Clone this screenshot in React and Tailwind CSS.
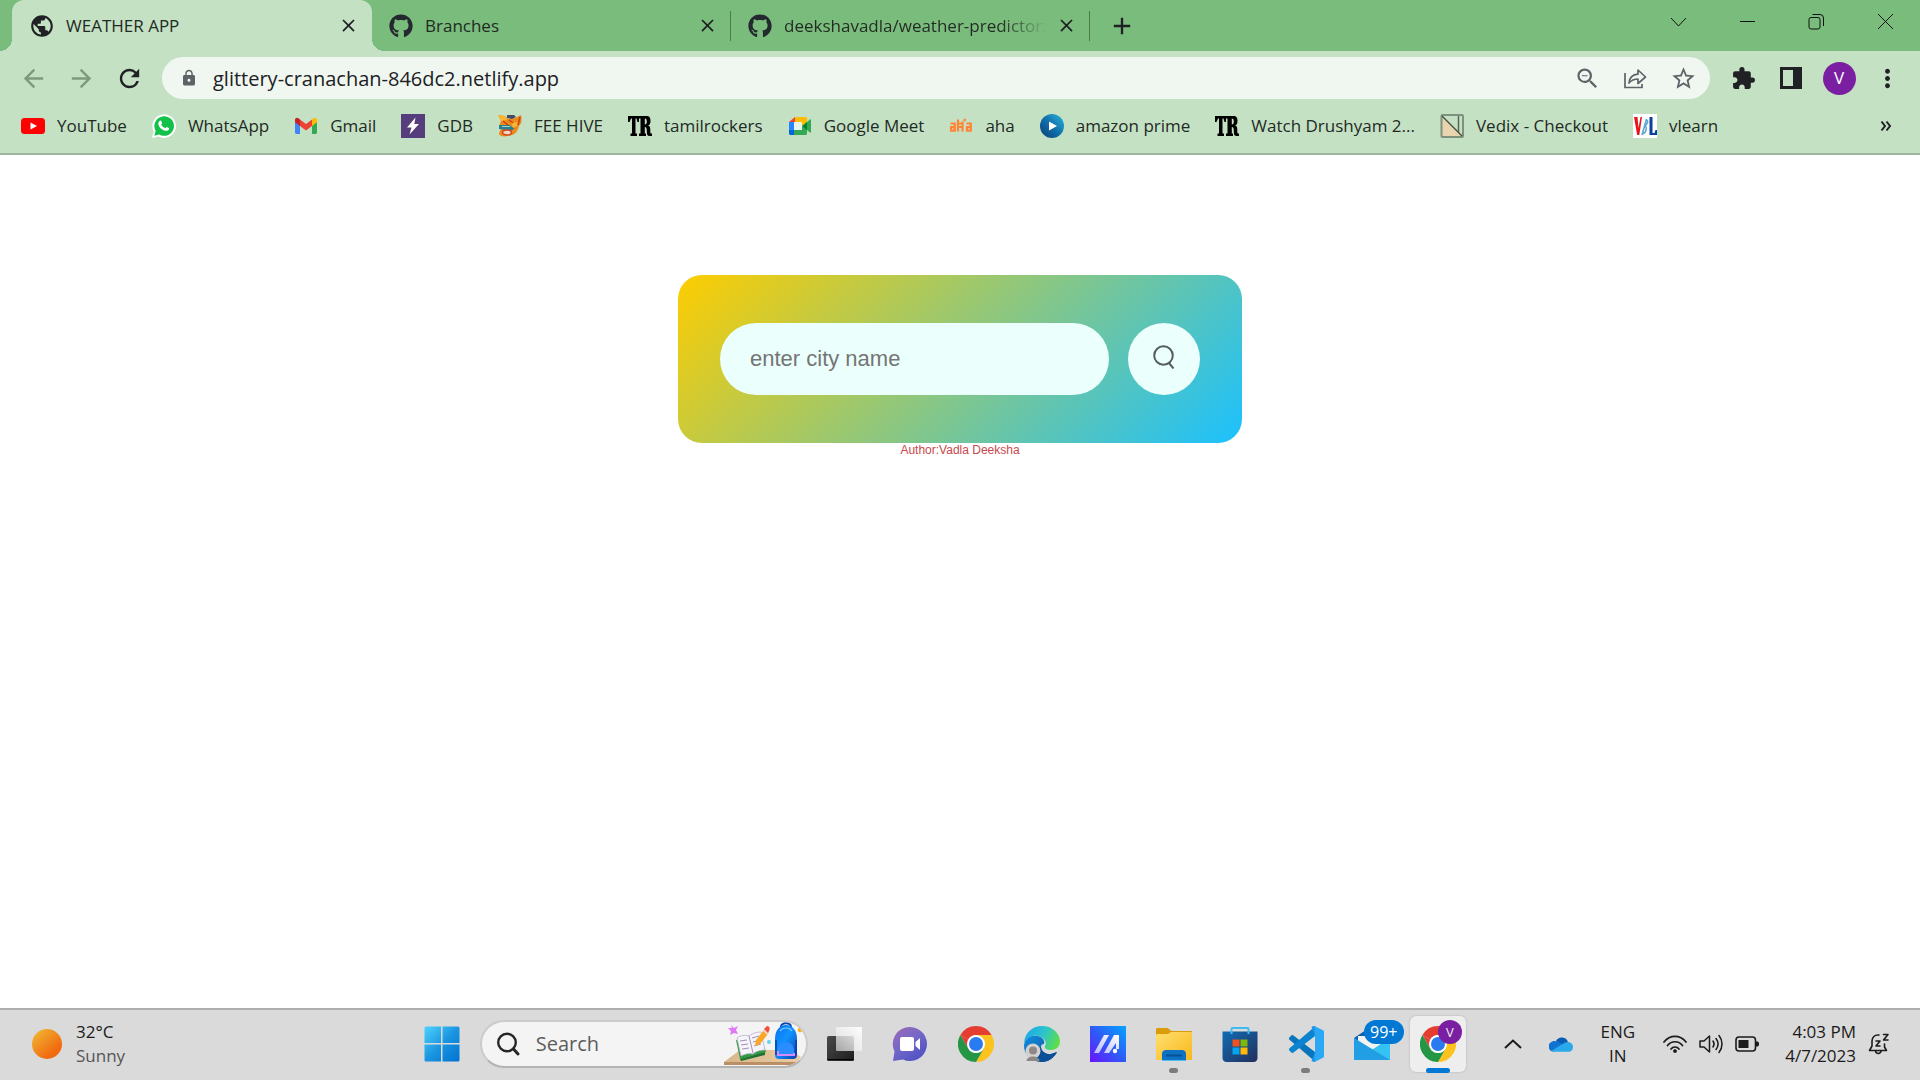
import React from "react";
import {
  MdPublic, MdClose, MdAdd, MdArrowBack, MdArrowForward, MdRefresh, MdLock,
  MdZoomOut, MdStarBorder, MdExtension, MdMoreVert,
} from "react-icons/md";
import { FaGithub } from "react-icons/fa";

/* ---------- browser window icons ---------- */

const ShareIcon = () => (
  <svg viewBox="0 0 24 24" className="size-6" fill="none" stroke="currentColor" strokeWidth="1.700">
    <path d="M2 7v14.500h17V18" />
    <path d="M6 17c.5-5 3.500-8.500 9-8.800V4l7.500 7-7.500 6.500v-4.500C11 13 8.500 14 6 17z" strokeLinejoin="round" />
  </svg>
);

const SidePanelIcon = () => (
  <svg viewBox="0 0 22 22" className="size-[22px]">
    <path fillRule="evenodd" d="M0 0h22v22H0zM3 3v16h10V3z" fill="#202124" />
  </svg>
);

/* ---------- bookmark icons ---------- */

const YouTube = () => (
  <svg viewBox="0 0 24 24" className="size-6">
    <rect y="4" width="24" height="16" rx="3.500" fill="#f00" />
    <path d="M9.500 8.500v7l6.500-3.500z" fill="#fff" />
  </svg>
);

const WhatsApp = () => (
  <svg viewBox="0 0 24 24" className="size-6">
    <path d="M0 24l1.700-6.300A11.800 11.800 0 1 1 6.300 22.400z" fill="#fff" />
    <path d="M2.300 21.700l1.400-4.700A9.800 9.800 0 1 1 7.200 20.500z" fill="#12c148" />
    <path d="M7.300 7.200c.6-.8 1.700-.8 2-.1l.8 1.900c.2.500-.8 1.300-.8 1.600.7 1.600 2.300 2.900 3.900 3.500.5 0 1.200-1.300 1.600-1.100l2 1c.5.300.3 1.600-.5 2.200-1 .8-2.400.9-4.300.2-2.400-.9-4.500-3-5.300-5-.7-1.800-.2-3.200.6-4.200z" fill="#fff" />
  </svg>
);

const Gmail = () => (
  <svg viewBox="0 0 24 24" className="size-6">
    <path d="M1 6v12.500c0 .8.700 1.500 1.500 1.500H6v-8.500z" fill="#4285f4" />
    <path d="M23 6v12.500c0 .8-.7 1.500-1.500 1.500H18v-8.500z" fill="#34a853" />
    <path d="M18 5.500v6.500l5-3.800V6c0-2-2.200-2.800-3.700-1.600z" fill="#fbbc04" />
    <path d="M6 5.500l6 4.500 6-4.500V12l-6 4.500L6 12z" fill="#ea4335" />
    <path d="M1 6v2.200L6 12V5.500L4.700 4.400C3.200 3.200 1 4 1 6z" fill="#c5221f" />
  </svg>
);

const Gdb = () => (
  <svg viewBox="0 0 24 24" className="size-6">
    <path d="M0 0h24v24H0z" fill="#563d7c" />
    <path d="M14.500 3.500L6 13.500h4.500L8.500 20.500 18 10h-4.700z" fill="#fff" />
  </svg>
);

const FeeHive = () => (
  <svg viewBox="0 0 24 24" className="size-6">
    <path d="M0 1l7 1 3 3 7-1 6-3c1 5 1 8-2 11-1 4-3 8-7 9-6 2-12 2-13-1 0-3 2-5 4-6L1 12 3 7z" fill="#ee8a1d" />
    <path d="M0 1l7 1 2 4-6 1zM13 7c2 2 5 2 7 0l-1 5-4 2z" fill="#f7b733" />
    <path d="M9 1h7l2 2-4 2-5-1z" fill="#454a63" />
    <path d="M1 11h11c1 2 3 3 5 3l-4 3-12-2z" fill="#2c7f91" />
    <path d="M4 12.500h8" stroke="#9ed1ca" strokeWidth="1" />
    <ellipse cx="9" cy="18.500" rx="4.500" ry="2.500" fill="#f2d7c7" stroke="#d24b1b" strokeWidth="1.500" />
    <path d="M5 7l5 4M11 6l4 3M22 3l-2 8" stroke="#c5420f" strokeWidth="1.500" fill="none" />
  </svg>
);

const Tr = () => (
  <svg viewBox="0 0 24 24" className="size-6">
    <path d="M0 2h11v6h-1.500L8.500 4.500H7.500v15H9V22H2.500v-2.500H4v-15H3L1.500 8H0z" />
    <path fillRule="evenodd" d="M11 2h7.500c3 0 4 2 4 4.800 0 2.700-.7 4.200-2.500 4.700 2 .6 2.300 2 2.300 4.500 0 2.300 0 3.500.7 3.500h1V22h-2.500c-2.200 0-2.700-1.500-2.700-4.500 0-3.200-.3-4.500-2-4.500v6.500H18V22h-7v-2.500h1.500v-15H11zM16.800 4.500v6c1.500 0 2-1 2-3s-.5-3-2-3z" />
  </svg>
);

const Meet = () => (
  <svg viewBox="0 0 24 24" className="size-6">
    <path d="M6 8h9v8H6z" fill="#e8f3ea" />
    <path d="M1 8l6-5v5z" fill="#ea4335" />
    <path d="M7 3h10.500c1 0 1.500.6 1.500 1.500V9l-5 3V8H7z" fill="#fbbc04" />
    <path d="M1 8h5v8H1z" fill="#2684fc" />
    <path d="M1 16h5v5H2.500C1.600 21 1 20.400 1 19.500z" fill="#0066da" />
    <path d="M6 16h8v-4l5 3v4.500c0 .9-.6 1.500-1.500 1.500H6z" fill="#34a853" />
    <path d="M14 12l5-4v8z" fill="#00832d" />
    <path d="M19 8l3-2.500c.5-.4 1-.1 1 .5v12c0 .6-.5.900-1 .5l-3-2.500z" fill="#34a853" />
  </svg>
);

const Aha = () => (
  <svg viewBox="0 0 24 24" className="size-6" fill="none" stroke="#ff8534" strokeWidth="2.200">
    <path d="M1.500 9.500h4.300v7.200H2v-3.500h4M9 5.500v12M9 9.500h3.500M13.500 7.500v10M9 13h5M17.500 9.500h4.300v7.200H18v-3.500h4M15 7l1.500-2" />
  </svg>
);

const Prime = () => (
  <svg viewBox="0 0 24 24" className="size-6">
    <defs>
      <linearGradient id="prime" x1="1" y1="0" x2="0" y2="1">
        <stop offset="0" stopColor="#2ab4dc" />
        <stop offset=".55" stopColor="#0f6aa6" />
        <stop offset="1" stopColor="#0a3f77" />
      </linearGradient>
    </defs>
    <circle cx="12" cy="12" r="12" fill="url(#prime)" />
    <path d="M9 7.500v9l8-4.500z" fill="#fff" />
  </svg>
);

const Vedix = () => (
  <svg viewBox="0 0 24 24" className="size-6">
    <path d="M2 2l20 20H2z" fill="#e8d5b0" />
    <rect x="1.500" y="1" width="21.500" height="22" rx="1" fill="none" stroke="#7e917d" strokeWidth="2" />
    <path d="M2 2l20 20" stroke="#3f4b3e" strokeWidth="1.200" />
    <path d="M18.500 2v16" stroke="#566455" strokeWidth="1.500" />
  </svg>
);

const Vlearn = () => (
  <svg viewBox="0 0 24 24" className="size-6">
    <path d="M0 0h24v24H0z" fill="#fff" />
    <path d="M1 3h3.500l1 11L7.500 3h1.500L6.300 21H4.200z" fill="#e8151b" />
    <path d="M13.500 5L9 21M13 6c3 0 1.500 5-1.500 6 3 0 2 7-2 8" fill="none" stroke="#5fa9cf" strokeWidth="1.600" />
    <path d="M16.500 3h3v16h2l1-3H24v5h-7.500z" fill="#0b3fa0" />
  </svg>
);

const bookmarks = [
  ["YouTube", YouTube], ["WhatsApp", WhatsApp], ["Gmail", Gmail], ["GDB", Gdb],
  ["FEE HIVE", FeeHive], ["tamilrockers", Tr], ["Google Meet", Meet], ["aha", Aha],
  ["amazon prime", Prime], ["Watch Drushyam 2...", Tr], ["Vedix - Checkout", Vedix],
  ["vlearn", Vlearn],
];

/* ---------- taskbar icons ---------- */

const WindowsLogo = () => (
  <svg viewBox="0 0 36 36" className="size-9">
    <defs>
      <linearGradient id="win" x1="0" y1="0" x2="1" y2="1">
        <stop offset="0" stopColor="#4fd3ff" />
        <stop offset=".5" stopColor="#1b95e0" />
        <stop offset="1" stopColor="#0072d2" />
      </linearGradient>
    </defs>
    <path d="M2 .5h15v16.500H.5V2A1.500 1.500 0 0 1 2 .5zM18.500 .5H34A1.500 1.500 0 0 1 35.500 2v15h-17zM.5 18.500H17v17H2A1.500 1.500 0 0 1 .5 34zM18.500 18.500h17V34a1.500 1.500 0 0 1-1.500 1.500H18.500z" fill="url(#win)" />
  </svg>
);

const Backpack = () => (
  <svg viewBox="0 0 86 44" className="-mr-1 h-11 w-[86px] shrink-0">
    <defs>
      <linearGradient id="bag" x1="0" y1="0" x2="1" y2="1">
        <stop offset="0" stopColor="#0a6ff0" />
        <stop offset=".45" stopColor="#1193ff" />
        <stop offset="1" stopColor="#0b3fb0" />
      </linearGradient>
      <linearGradient id="desk" x1="0" y1="0" x2="1" y2="0">
        <stop offset="0" stopColor="#d9b78c" />
        <stop offset="1" stopColor="#e9caa2" />
      </linearGradient>
    </defs>
    <path d="M0 40l16-12h52l9 7-4 5z" fill="url(#desk)" />
    <path d="M0 40h73l-6 3H0z" fill="#b98f63" />
    <path d="M12 18l4 19 26-7-2-6z" fill="#2f9b45" />
    <path d="M16 37l25-7v3l-24 6z" fill="#1d7432" />
    <path d="M13 16c4-3 8-3 12-2 4-3 8-4 12-4l4 18c-4 0-9 1-12 4-4-1-8 0-12 2z" fill="#f6f3fb" stroke="#b8b2c8" strokeWidth=".8" />
    <path d="M25 14l4 17M16 19l7-1M17 23l7-1M18 27l7-1M28 16l7-2M29 20l7-2M30 24l7-2" stroke="#9c95b3" strokeWidth="1" />
    <path d="M32 18l-1 6 5-2 8-10-4-4z" fill="#fba629" />
    <path d="M40 8l4 4" stroke="#f7d9c0" strokeWidth="2.500" />
    <path d="M40 7l3-3c3 0 3 3 2 5l-1 2z" fill="#f0503e" />
    <path d="M7 3l3 3 4-2-2 4 2 4-4-1-4 2 1-4-3-3 4 0z" fill="#e078f5" />
    <circle cx="45" cy="20" r="2" fill="#66d3e8" />
    <circle cx="76" cy="8" r="2.200" fill="#ffab0a" />
    <path d="M57 5c0-5 10-5 10 0" fill="none" stroke="#0b46a8" strokeWidth="2" />
    <path d="M51 17C51 8 56 3 62 3s11 5 11 14v16c0 3-2 4-4 4H55c-2 0-4-1-4-4z" fill="url(#bag)" />
    <path d="M52 18v15M72 18v15" stroke="#0b3c9e" strokeWidth="1.500" />
    <path d="M54 29c0-12 16-12 16 0v4H54z" fill="#2a8dff" />
    <path d="M54 29v4h16v-2" fill="none" stroke="#d58bff" strokeWidth="2" />
    <path d="M56 9c3-4 9-4 12 0" fill="none" stroke="#79c8ff" strokeWidth="1.200" />
  </svg>
);

const TaskView = () => (
  <svg viewBox="0 0 36 36" className="size-9">
    <defs>
      <linearGradient id="tvb" x1="0" y1="0" x2="1" y2="1">
        <stop offset="0" stopColor="#4a4a4a" /><stop offset="1" stopColor="#1d1d1d" />
      </linearGradient>
      <linearGradient id="tvf" x1="1" y1="0" x2="0" y2="1">
        <stop offset="0" stopColor="#fff" stopOpacity=".95" /><stop offset="1" stopColor="#e4e4e4" stopOpacity=".65" />
      </linearGradient>
    </defs>
    <rect x="1" y="10" width="27" height="25" rx="1.500" fill="url(#tvb)" />
    <path d="M1.500 33.500h26" stroke="#000" strokeWidth="1" />
    <rect x="10" y="1" width="26" height="24" rx="1" fill="url(#tvf)" />
  </svg>
);

const Chat = () => (
  <svg viewBox="0 0 36 36" className="size-9">
    <defs>
      <linearGradient id="chat" x1=".1" y1="0" x2=".8" y2="1">
        <stop offset="0" stopColor="#9b68b4" /><stop offset=".45" stopColor="#7568c8" /><stop offset="1" stopColor="#4c50c4" />
      </linearGradient>
    </defs>
    <path d="M18 1a17 17 0 1 1-7 32.500L1 35l1.500-9.500A17 17 0 0 1 18 1z" fill="url(#chat)" />
    <rect x="8" y="11" width="14" height="14" rx="2" fill="#fff" />
    <path d="M23.500 16l4.500-4v12l-4.500-4z" fill="#fff" />
  </svg>
);

const Chrome = () => (
  <svg viewBox="0 0 36 36" className="size-9">
    <path d="M18 0A18 18 0 0 1 33.600 9H18a9 9 0 0 0-7.800 4.500L2.400 9A18 18 0 0 1 18 0z" fill="#e53e30" />
    <path d="M2.400 9l7.800 13.500L18 18z" fill="#e53e30" />
    <path d="M33.600 9A18 18 0 0 1 18 36l7.800-13.500L18 9z" fill="#fcc31e" />
    <path d="M2.400 9l7.800 13.500A9 9 0 0 0 25.800 22.500L18 36A18 18 0 0 1 2.400 9z" fill="#249645" />
    <circle cx="18" cy="18" r="9" fill="#fff" />
    <circle cx="18" cy="18" r="7" fill="#2a7bf0" />
  </svg>
);

const Edge = () => (
  <svg viewBox="0 0 36 36" className="size-9">
    <defs>
      <linearGradient id="edgeTop" x1="0" y1=".3" x2="1" y2=".6">
        <stop offset="0" stopColor="#1ca9e6" /><stop offset=".5" stopColor="#2bc3cf" /><stop offset="1" stopColor="#60e040" />
      </linearGradient>
      <linearGradient id="edgeMid" x1="0" y1="0" x2="1" y2="1">
        <stop offset="0" stopColor="#138fe0" /><stop offset="1" stopColor="#0b4b93" />
      </linearGradient>
    </defs>
    <path d="M0 20C0 12 8 8 14 10c5 1 7 5 6 8-2 0-3 1-3 3 0 4 5 8 10 7l6-2c-3 6-9 10-15 10C8 36 0 29 0 20z" fill="url(#edgeMid)" />
    <path d="M0 17C1 6 9 0 18 0c11 0 18 8 18 15 0 6-4 9-9 9-5 0-7-2-6-4 2-3 0-8-6-10C9 8 3 11 0 17z" fill="url(#edgeTop)" />
    <path d="M17 21c0 4 5 8 10 7l6-2c-3 6-9 10-15 10l-4-1c-2-5-1-11 3-14z" fill="#0c4f99" />
    <circle cx="9" cy="25" r="7.500" fill="#d3d1cf" />
    <circle cx="9" cy="24.500" r="4" fill="#8d8885" />
    <path d="M2.500 35c0-6 13-6 13 0z" fill="#8d8885" />
  </svg>
);

const MyAsus = () => (
  <svg viewBox="0 0 36 36" className="size-9">
    <defs>
      <linearGradient id="asus" x1="1" y1="0" x2="0" y2="1">
        <stop offset="0" stopColor="#05a5ff" /><stop offset=".5" stopColor="#2e5cf6" /><stop offset="1" stopColor="#6a12ff" />
      </linearGradient>
      <linearGradient id="asusBar" x1="1" y1="0" x2="0" y2="1">
        <stop offset="0" stopColor="#fff" /><stop offset="1" stopColor="#b7b9fb" />
      </linearGradient>
    </defs>
    <path d="M0 0h36v36H0z" fill="url(#asus)" />
    <path d="M14 9h5L9 27H4zM24 9h5v14h-3v-6l-7 10h-5z" fill="url(#asusBar)" />
    <circle cx="25" cy="25" r="2.200" fill="#fff" />
  </svg>
);

const Explorer = () => (
  <svg viewBox="0 0 36 36" className="size-9">
    <defs>
      <linearGradient id="folder" x1="0" y1="0" x2="1" y2="1">
        <stop offset="0" stopColor="#ffdf70" /><stop offset="1" stopColor="#f9b81c" />
      </linearGradient>
    </defs>
    <path d="M0 3.500C0 2.600.6 2 1.500 2H11c2 0 3 3 5 3h19c.6 0 1 .5 1 1v5H0z" fill="#dc9c09" />
    <path d="M0 9.500C0 8 1 8 2 8h9c2 0 3-2 5-2h20v28H0z" fill="url(#folder)" />
    <path d="M6 34v-6c0-2.500 1.500-4 4-4h16c2.500 0 4 1.500 4 4v6z" fill="#0d72c4" />
    <path d="M11 29.500h14" stroke="#0a4f93" strokeWidth="2" strokeLinecap="round" />
    <path d="M6 34.500h24" stroke="#52bdf3" strokeWidth="1" />
  </svg>
);

const Store = () => (
  <svg viewBox="0 0 36 36" className="size-9">
    <defs>
      <linearGradient id="store" x1="0" y1="0" x2="1" y2="1">
        <stop offset="0" stopColor="#0f6db5" /><stop offset="1" stopColor="#232f5c" />
      </linearGradient>
    </defs>
    <path d="M.5 5.500h35V32c0 2-1.500 4-4 4h-27c-2.500 0-4-2-4-4z" fill="url(#store)" />
    <path d="M9.500 8V3c0-1 .5-1 1-1h15c.5 0 1 0 1 1v5" fill="none" stroke="#3cbcf0" strokeWidth="2" />
    <path d="M10.500 13.500h7v7h-7z" fill="#f2511d" />
    <path d="M18.500 13.500h7v7h-7z" fill="#7db80a" />
    <path d="M10.500 21.500h7v7h-7z" fill="#06a3ee" />
    <path d="M18.500 21.500h7v7h-7z" fill="#ffba08" />
  </svg>
);

const VsCode = () => (
  <svg viewBox="0 0 36 36" className="size-9">
    <path d="M1 12l2-2.300c1-.9 2-.7 2.800 0L27 26v9.500L1.500 13.800c-.6-.6-.8-1.200-.5-1.800z" fill="#0875bd" />
    <path d="M1 24l2 2.300c1 .9 2 .7 2.800 0L27 10V.5L1.500 22.200c-.6.6-.8 1.200-.5 1.800z" fill="#0b83cf" />
    <path d="M27 .3L34.500 4c1 .5 1.500 1 1.500 2v24c0 1-.5 1.500-1.500 2L27 35.700z" fill="#2aa7f5" />
    <path d="M27 .3c-1.500-.5-2.500 0-3.500 1L27 10v16l-3.500 8.700c1 1 2 1.500 3.500 1z" fill="#2097e6" />
  </svg>
);

const Mail = () => (
  <svg viewBox="0 0 36 36" className="size-9">
    <path d="M0 12L18 0l18 12v8H0z" fill="#0a62b0" />
    <path d="M4 10h28v14H4z" fill="#f3f3f3" />
    <path d="M36 12L18 24l18 10z" fill="#35c3f3" />
    <path d="M0 12l18 12L36 12v22H0z" fill="#35c3f3" />
    <path d="M0 12l36 22H0z" fill="#229fe4" />
  </svg>
);

const OneDrive = () => (
  <svg viewBox="0 0 24 16" className="h-4 w-6">
    <path d="M7 5a6.500 6.500 0 0 1 12 1l-6 5z" fill="#0a5bb3" />
    <path d="M5 15.500A5 5 0 0 1 1 7c2-2.500 5.500-2.500 7.500-1.500L20 11z" fill="#1272cf" />
    <path d="M3 14.500l13-8c3-1.500 8 0 8 4.500 0 3-2 4.800-4.500 4.800H5c-1 0-2-.5-2-1.300z" fill="#29a8ea" />
  </svg>
);

const Wifi = () => (
  <svg viewBox="0 0 24 20" className="h-5 w-6" fill="none" stroke="#1b1b1b" strokeWidth="1.700" strokeLinecap="round">
    <path d="M1 8c6-7.500 16-7.500 22 0M4.500 11.500c4-5 11-5 15 0M8 15c2-2.700 6-2.700 8 0" />
    <circle cx="12" cy="17" r="1.500" fill="#1b1b1b" stroke="none" />
    <circle cx="12" cy="17" r="1" />
  </svg>
);

const Volume = () => (
  <svg viewBox="0 0 24 20" className="h-5 w-6" fill="none" stroke="#1b1b1b" strokeWidth="1.500" strokeLinecap="round" strokeLinejoin="round">
    <path d="M1 7h4l5.500-5v16L5 13H1zM14 7c1.300 1.800 1.300 4.200 0 6M17 4.500c2.500 3.300 2.500 7.700 0 11M20 1.500c4 5 4 12 0 17" />
  </svg>
);

const Battery = () => (
  <svg viewBox="0 0 24 16" className="h-4 w-6">
    <rect x="1" y="1" width="19.500" height="14" rx="3" fill="none" stroke="#1b1b1b" strokeWidth="1.600" />
    <rect x="3.500" y="4" width="10" height="8" fill="#1b1b1b" />
    <path d="M21 5.500h1.500c1 0 1.500 1 1.500 2.500s-.5 2.500-1.500 2.500H21z" fill="#1b1b1b" />
  </svg>
);

const BellSnooze = () => (
  <svg viewBox="0 0 22 22" className="size-[22px]" fill="none" stroke="#1b1b1b" strokeWidth="1.600" strokeLinecap="round" strokeLinejoin="round">
    <path d="M11 2C6.500 1.500 4 4.500 4 8v5l-2.500 4.500h17L16.500 14v-3M7.500 18c.5 3.300 5 3.300 5.500 0" />
    <path d="M8 8h4l-4 5h4" />
    <path d="M15.500 1.500h4.500l-4.500 5.500h4.500" />
  </svg>
);

const apps = [
  { name: "Task view", Icon: TaskView },
  { name: "Chat", Icon: Chat },
  { name: "Google Chrome", Icon: Chrome },
  { name: "Microsoft Edge", Icon: Edge },
  { name: "MyASUS", Icon: MyAsus },
  { name: "File Explorer", Icon: Explorer, open: true },
  { name: "Microsoft Store", Icon: Store },
  { name: "Visual Studio Code", Icon: VsCode, open: true },
  { name: "Mail", Icon: Mail, count: "99+" },
  { name: "Google Chrome, profile V", Icon: Chrome, active: true },
];

/* ---------- browser ---------- */

const GlobeIcon = () => <MdPublic className="-mx-px size-[26px] shrink-0 text-[#202124]" />;
const GithubIcon = () => <FaGithub className="size-6 shrink-0 text-[#24292f]" />;

function Tab({ title, Icon, active, fade }) {
  return (
    <div
      role="tab"
      aria-selected={!!active}
      className={
        active
          ? "relative flex w-[360px] items-center rounded-t-xl bg-[#c5e1c4] pr-3 pl-[18px]"
          : "relative flex w-[359px] items-center pr-3 pl-[17px]"
      }
    >
      {active && (
        <>
          <span className="absolute bottom-0 -left-3 size-3 bg-[radial-gradient(circle_at_0_0,transparent_12px,#c5e1c4_12px)]" />
          <span className="absolute -right-3 bottom-0 size-3 bg-[radial-gradient(circle_at_100%_0,transparent_12px,#c5e1c4_12px)]" />
        </>
      )}
      <Icon />
      <span
        className={
          fade
            ? "ml-3 bg-[linear-gradient(to_right,#222a24_82%,#7abc7c)] bg-clip-text whitespace-nowrap text-transparent"
            : "ml-3 whitespace-nowrap"
        }
      >
        {title}
      </span>
      <button aria-label={"Close " + title} className="ml-auto flex size-6 shrink-0 items-center justify-center">
        <MdClose className="size-[21px] text-[#202124]" />
      </button>
      {!active && <span className="absolute right-0 h-[30px] w-px bg-[#4c7a4e]" />}
    </div>
  );
}

function WindowButtons() {
  const icons = [
    ["Search tabs", "M0 4l7.500 8L15 4"],
    ["Minimize", "M0 7.500h15"],
    ["Restore", "M2 3.500h7a2 2 0 0 1 2 2V13a2 2 0 0 1-2 2H2a2 2 0 0 1-2-2V5.500a2 2 0 0 1 2-2zM3.500 .5H11a3.500 3.500 0 0 1 3.500 3.500v8"],
    ["Close", "M0 0l15 15M15 0L0 15"],
  ];
  return (
    <div className="ml-auto flex h-[43px] shrink-0">
      {icons.map(([name, d]) => (
        <button key={name} aria-label={name} className="flex w-[69px] items-center justify-center">
          <svg viewBox="-1 -1 17 17" className="size-[17px]" fill="none" stroke="#111" strokeWidth="1">
            <path d={d} />
          </svg>
        </button>
      ))}
    </div>
  );
}

function ToolButton({ name, children }) {
  return (
    <button aria-label={name} className="flex size-12 shrink-0 items-center justify-center">
      {children}
    </button>
  );
}

function Browser() {
  return (
    <header className="border-b-2 border-[#9fb39f] bg-[#c5e1c4] text-[#222a24]">
      <div className="flex h-[51px] bg-[#7abc7c] pl-3 text-[17px]">
        <div role="tablist" className="flex">
          <Tab title="WEATHER APP" Icon={GlobeIcon} active />
          <Tab title="Branches" Icon={GithubIcon} />
          <Tab title="deekshavadla/weather-predictor:" Icon={GithubIcon} fade />
        </div>
        <button aria-label="New tab" className="ml-5 flex w-6 items-center justify-center text-[#202124]">
          <MdAdd className="size-7 shrink-0" />
        </button>
        <WindowButtons />
      </div>

      <div className="flex h-[54px] items-center px-[9px] text-[#5f6368]">
        <div className="flex text-[#7c9a7e]">
          <ToolButton name="Back"><MdArrowBack className="size-[29px]" /></ToolButton>
          <ToolButton name="Forward"><MdArrowForward className="size-[29px]" /></ToolButton>
          <ToolButton name="Reload"><MdRefresh className="size-[29px] text-[#202124]" /></ToolButton>
        </div>
        <div className="mx-[9px] flex h-[42px] flex-1 items-center rounded-full bg-[#f0f7f0] pr-[3px] pl-[18px]">
          <MdLock className="size-[18px]" />
          <input
            aria-label="Address"
            defaultValue="glittery-cranachan-846dc2.netlify.app"
            className="ml-[15px] min-w-0 flex-1 bg-transparent pt-0.5 text-[20px] text-[#202124] outline-none"
          />
          <ToolButton name="Zoom out"><MdZoomOut className="size-[27px]" /></ToolButton>
          <ToolButton name="Share"><ShareIcon /></ToolButton>
          <ToolButton name="Bookmark this tab"><MdStarBorder className="size-[27px]" /></ToolButton>
        </div>
        <div className="flex items-center text-[#202124]">
          <ToolButton name="Extensions"><MdExtension className="size-[25px]" /></ToolButton>
          <ToolButton name="Side panel"><SidePanelIcon /></ToolButton>
          <ToolButton name="Profile">
            <span className="flex size-[33px] items-center justify-center rounded-full bg-[#7b1fa2] text-[17px] text-white">V</span>
          </ToolButton>
          <ToolButton name="Menu"><MdMoreVert className="size-[29px]" /></ToolButton>
        </div>
      </div>

      <nav aria-label="Bookmarks" className="flex h-12 items-center pr-7 pb-1.5 pl-[21px] text-[17px]">
        <ul className="flex gap-[25px]">
          {bookmarks.map(([name, Icon]) => (
            <li key={name}>
              <a href="#" className="flex items-center gap-3 whitespace-nowrap">
                <Icon />
                {name}
              </a>
            </li>
          ))}
        </ul>
        <button aria-label="More bookmarks" className="ml-auto">
          <svg viewBox="0 0 12 12" className="size-3" fill="none" stroke="#202124" strokeWidth="2">
            <path d="M1.500 1.500L5 6l-3.500 4.500M6.500 1.500L10 6l-3.500 4.500" />
          </svg>
        </button>
      </nav>
    </header>
  );
}

/* ---------- page ---------- */

function WeatherPage() {
  return (
    <main className="flex flex-1 flex-col items-center bg-white pt-[120px] font-['Liberation_Sans',sans-serif]">
      <form
        onSubmit={(e) => e.preventDefault()}
        className="flex w-[564px] max-w-full items-center gap-[19px] rounded-3xl bg-[linear-gradient(135deg,#fecd00,#1bc1ff)] px-[42px] py-12"
      >
        <input
          aria-label="City name"
          placeholder="enter city name"
          className="h-[72px] min-w-0 flex-1 rounded-full bg-[#ebfffc] px-[30px] text-[22px] text-[#555] outline-none placeholder:text-[#757575]"
        />
        <button aria-label="Search" className="flex size-[72px] shrink-0 items-center justify-center rounded-full bg-[#ebfffc] pb-1">
          <svg viewBox="0 0 22 24" className="h-6 w-[22px]" fill="none" stroke="#555e5f" strokeWidth="2">
            <circle cx="10.500" cy="10.500" r="9.300" />
            <path d="M15.500 17.500l5 6" />
          </svg>
        </button>
      </form>
      <p className="text-[12px] leading-[14px] text-[#c8484d]">Author:Vadla Deeksha</p>
    </main>
  );
}

/* ---------- taskbar ---------- */

function AppButton({ name, Icon, open, active, count }) {
  return (
    <button
      aria-label={name}
      className={
        active
          ? "relative flex size-14 items-center justify-center rounded-md bg-[#eeeeee] shadow-[0_0_2px_#aaa]"
          : "relative flex size-14 items-center justify-center"
      }
    >
      <Icon />
      {count && (
        <span className="absolute top-1 -right-1 flex h-6 w-10 items-center justify-center rounded-full bg-[#0078d4] text-[16px] text-white">
          {count}
        </span>
      )}
      {active && (
        <span className="absolute top-1 right-1 flex size-6 items-center justify-center rounded-full bg-[#7b1fa2] text-[13px] text-[#eee]">V</span>
      )}
      {open && <span className="absolute -bottom-px h-[5px] w-[9px] rounded-full bg-[#7c7c7c]" />}
      {active && <span className="absolute -bottom-px h-[5px] w-6 rounded-full bg-[#0078d4]" />}
    </button>
  );
}

function Taskbar() {
  return (
    <footer className="flex h-[72px] items-center border-t-2 border-[#adadad] bg-[#dadada] pb-0.5 text-[17px] leading-6 text-[#1b1b1b]">
      <div className="flex flex-9 items-center gap-[14px] pl-8">
        <span className="size-[30px] rounded-full bg-[linear-gradient(140deg,#f0bd36,#f16a10_75%)]" />
        <div>
          <p>32°C</p>
          <p className="text-[#555]">Sunny</p>
        </div>
      </div>

      <div className="flex shrink-0 items-center gap-[10px]">
        <button aria-label="Start" className="flex size-14 items-center justify-center"><WindowsLogo /></button>
        <label className="mr-[-2px] flex h-12 w-[328px] items-center overflow-hidden rounded-full border-2 border-[#cbcbcb] border-b-[#b3b3b3] bg-[#f4f4f4] pl-[14px]">
          <svg viewBox="0 0 24 24" className="size-6 shrink-0" fill="none" stroke="#262626" strokeWidth="2.400" strokeLinecap="round">
            <circle cx="11" cy="10.500" r="8.800" />
            <path d="M17.500 17l4.500 5" strokeWidth="3" />
          </svg>
          <input aria-label="Search" placeholder="Search" className="ml-4 min-w-0 flex-1 bg-transparent text-[20px] outline-none placeholder:text-[#5c5c5c]" />
          <Backpack />
        </label>
        {apps.map((app) => <AppButton key={app.name} {...app} />)}
      </div>

      <div className="flex flex-10 items-center justify-end pr-[30px]">
        <button aria-label="Show hidden icons">
          <svg viewBox="0 0 18 10" className="h-[10px] w-[18px]" fill="none" stroke="#1b1b1b" strokeWidth="2">
            <path d="M1 9l8-7.500L17 9" />
          </svg>
        </button>
        <button aria-label="OneDrive" className="ml-[27px]"><OneDrive /></button>
        <button aria-label="Language" className="ml-7">
          <span className="block">ENG</span>
          <span className="block">IN</span>
        </button>
        <button aria-label="Network, volume and battery" className="ml-7 flex items-center gap-3">
          <Wifi /><Volume /><Battery />
        </button>
        <button aria-label="Date and time" className="ml-[26px] text-right">
          <span className="block">4:03 PM</span>
          <span className="block">4/7/2023</span>
        </button>
        <button aria-label="Notifications" className="ml-3"><BellSnooze /></button>
      </div>
    </footer>
  );
}

export default function App() {
  return (
    <div className="flex min-h-screen flex-col overflow-x-hidden font-['Open_Sans','Noto_Sans',sans-serif]">
      <Browser />
      <WeatherPage />
      <Taskbar />
    </div>
  );
}
